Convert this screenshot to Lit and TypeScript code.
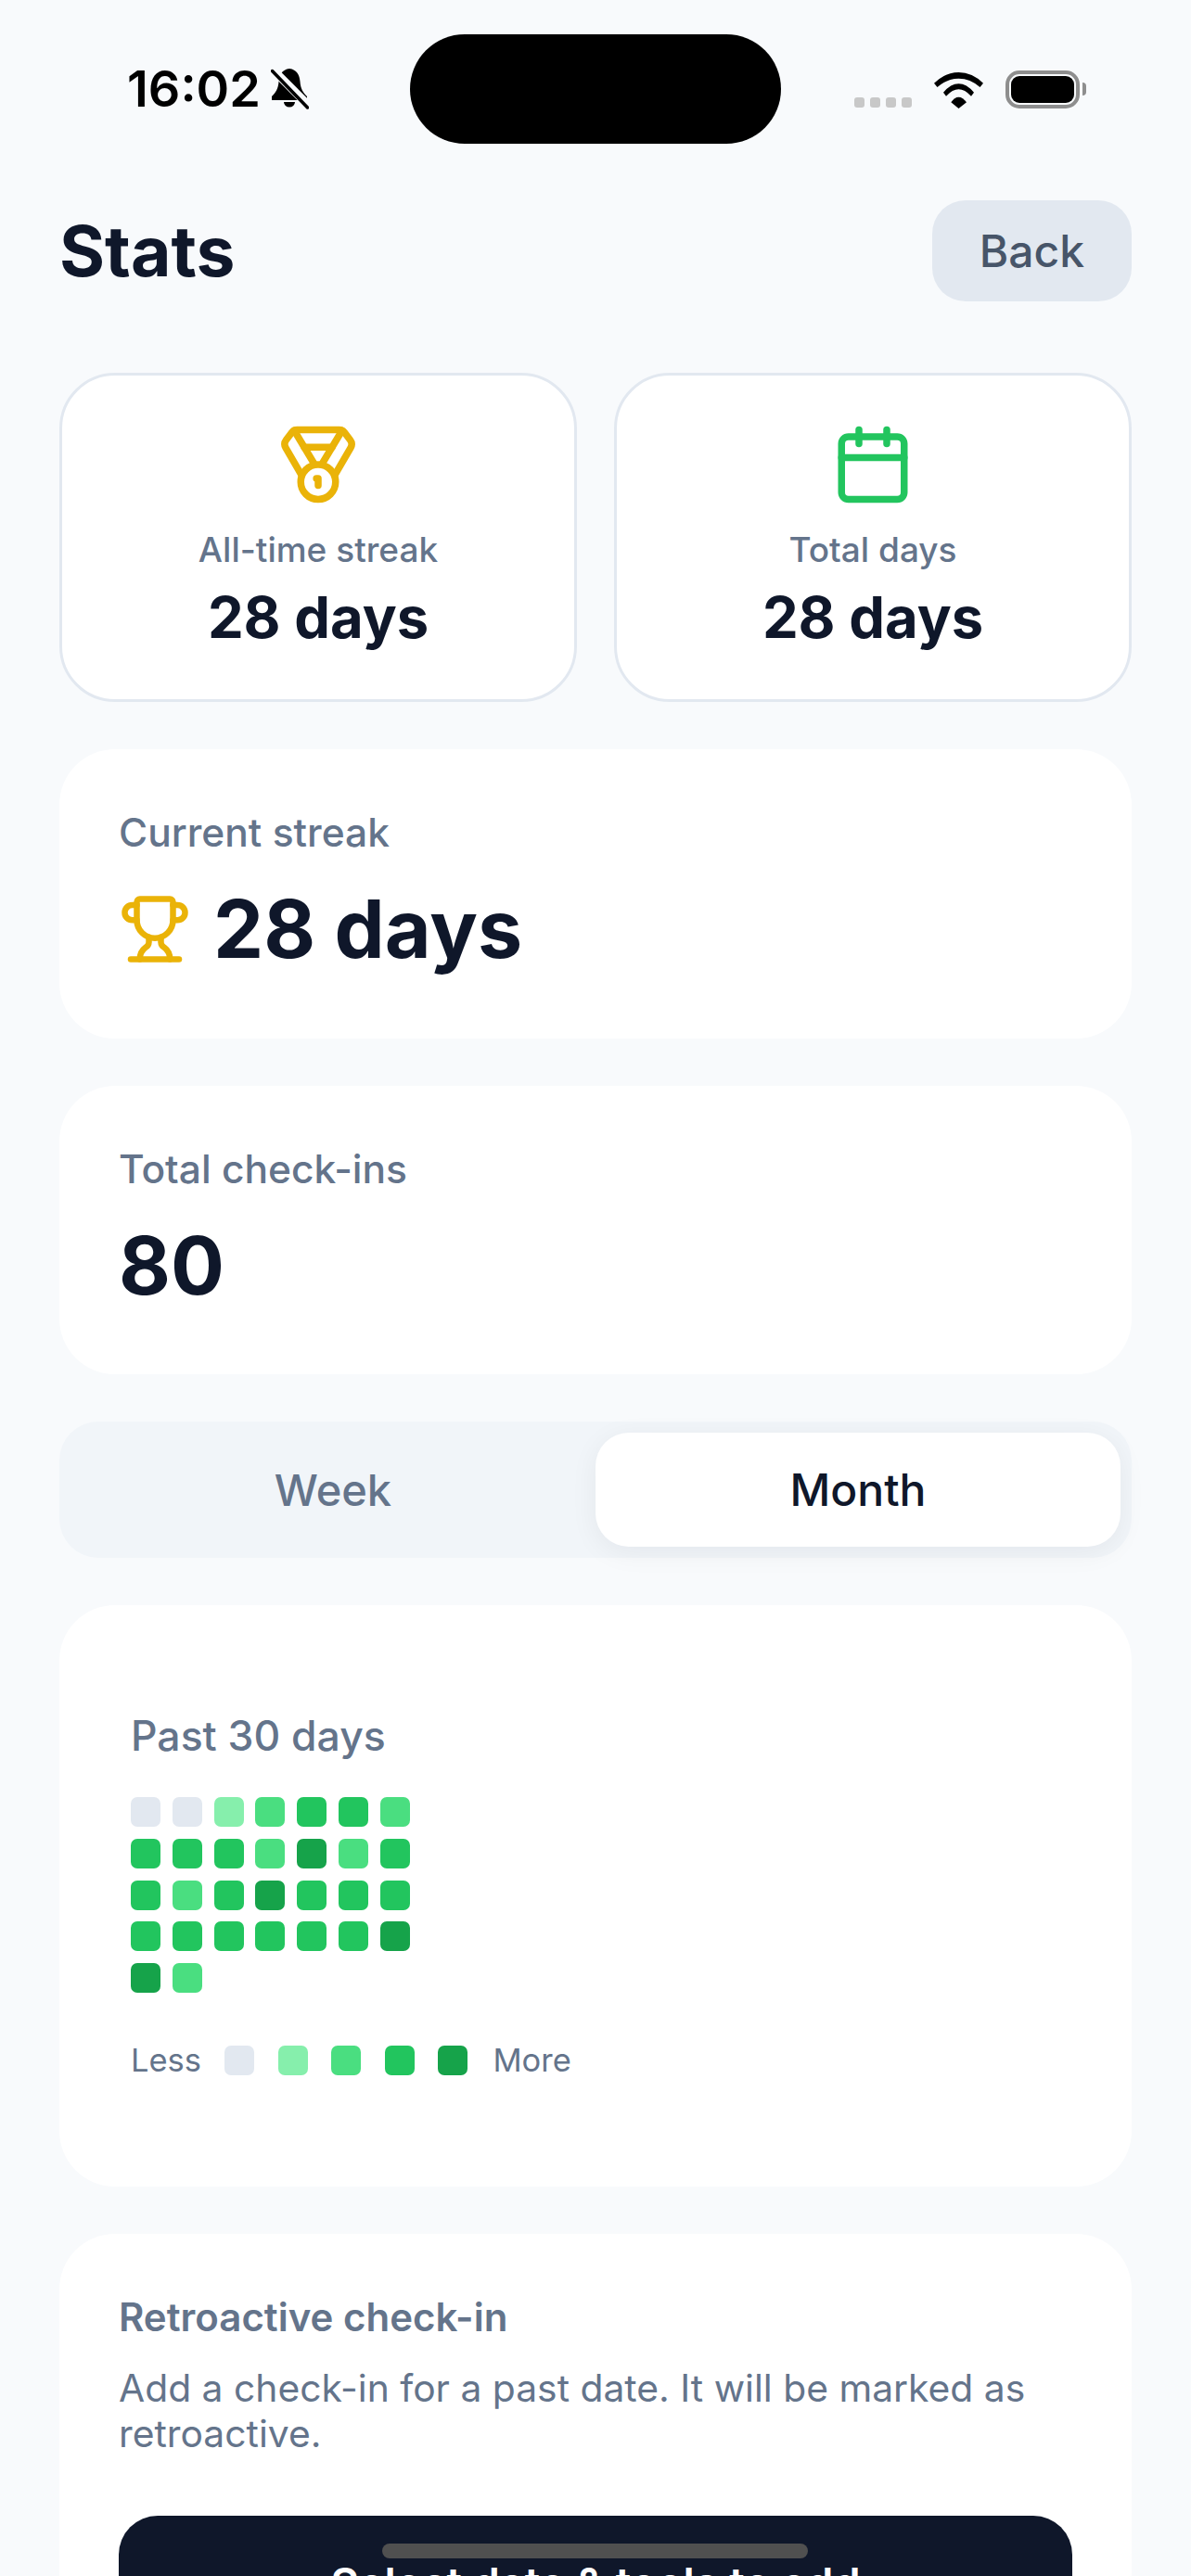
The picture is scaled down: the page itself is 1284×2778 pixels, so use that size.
import { LitElement, html, css, svg } from "lit";
import { customElement } from "lit/decorators.js";

const LEVELS = ["#e2e8f0", "#86efac", "#4ade80", "#22c55e", "#16a34a"];

// past 30 days, oldest first
const DAYS = [
  0, 0, 1, 2, 3, 3, 2,
  3, 3, 3, 2, 4, 2, 3,
  3, 2, 3, 4, 3, 3, 3,
  3, 3, 3, 3, 3, 3, 4,
  4, 2,
];

const medal = svg`
  <path d="M7.21 15 2.66 7.14a2 2 0 0 1 .13-2.2L4.4 2.8A2 2 0 0 1 6 2h12a2 2 0 0 1 1.6.8l1.61 2.14a2 2 0 0 1 .14 2.2L16.79 15" />
  <path d="M11 12 5.12 2.2" />
  <path d="m13 12 5.88-9.8" />
  <path d="M8 7h8" />
  <circle cx="12" cy="17" r="5" />
  <path d="M12 18v-2h-.5" />
`;

const calendar = svg`
  <path d="M8 2v4" />
  <path d="M16 2v4" />
  <rect width="18" height="18" x="3" y="4" rx="2" />
  <path d="M3 10h18" />
`;

const trophy = svg`
  <path d="M10 14.66v1.626a2 2 0 0 1-.976 1.696A5 5 0 0 0 7 21.978" />
  <path d="M14 14.66v1.626a2 2 0 0 0 .976 1.696A5 5 0 0 1 17 21.978" />
  <path d="M18 9h1.5a1 1 0 0 0 0-5H18" />
  <path d="M4 22h16" />
  <path d="M6 9a6 6 0 0 0 12 0V3a1 1 0 0 0-1-1H7a1 1 0 0 0-1 1z" />
  <path d="M6 9H4.5a1 1 0 0 1 0-5H6" />
`;

@customElement("app-root")
export class AppRoot extends LitElement {
  static styles = css`
    :host {
      display: block;
      position: relative;
      width: 1284px;
      height: 2778px;
      overflow: hidden;
      background: #f8fafc;
      font-family: Inter, "Liberation Sans", sans-serif;
      color: #0f172a;
    }

    svg.icon {
      display: block;
      fill: none;
      stroke-linecap: round;
      stroke-linejoin: round;
      stroke-width: 2;
    }

    .status {
      display: flex;
      align-items: center;
      height: 118px;
      padding: 37px 0 0 137px;
      color: #000;
    }
    .status-left {
      display: flex;
      align-items: center;
      gap: 16px;
      width: 305px;
    }
    .time {
      font-size: 54px;
      font-weight: 600;
      line-height: 60px;
      width: 139px;
    }
    .island {
      width: 400px;
      height: 118px;
      border-radius: 59px;
      background: #000;
    }
    .status-right {
      display: flex;
      align-items: flex-end;
      gap: 24px;
      margin-left: 79px;
    }
    .dots {
      display: flex;
      gap: 6px;
      margin-bottom: 1px;
    }
    .dots span {
      width: 11px;
      height: 11px;
      border-radius: 3px;
      background: #c8c8c8;
    }
    .battery {
      display: flex;
      align-items: center;
      gap: 3px;
    }
    .battery-body {
      width: 80px;
      height: 41px;
      box-sizing: border-box;
      border: 4px solid #8e8e8e;
      border-radius: 15px;
      padding: 2px;
    }
    .battery-body div {
      height: 100%;
      border-radius: 9px;
      background: #000;
    }
    .battery-nub {
      width: 4px;
      height: 14px;
      border-radius: 0 4px 4px 0;
      background: #8e8e8e;
    }

    main {
      display: flex;
      flex-direction: column;
      gap: 51px;
      padding: 0 64px;
    }

    header {
      display: flex;
      align-items: center;
      justify-content: space-between;
      margin: 61px 0 77px;
    }
    h1 {
      margin: 0;
      font-size: 75px;
      font-weight: 700;
      line-height: 84px;
    }
    .back {
      width: 215px;
      height: 109px;
      border-radius: 36px;
      background: #e2e8f0;
      color: #475569;
      font-size: 48px;
      font-weight: 500;
      line-height: 109px;
      text-align: center;
    }

    .highlights {
      display: grid;
      grid-template-columns: 1fr 1fr;
      gap: 40px;
    }
    .highlight {
      display: flex;
      flex-direction: column;
      align-items: center;
      height: 355px;
      box-sizing: border-box;
      padding-top: 51px;
      border: 3px solid #e2e8f0;
      border-radius: 60px;
      background: #fff;
    }
    .highlight .label {
      margin-top: 25px;
      font-size: 37px;
      font-weight: 500;
      line-height: 44px;
      color: #64748b;
    }
    .highlight .value {
      margin-top: 15px;
      font-size: 61.5px;
      font-weight: 700;
      line-height: 72px;
    }

    .card {
      box-sizing: border-box;
      border-radius: 60px;
      background: #fff;
    }
    .metric {
      height: 311.5px;
      padding: 64px 64px 0;
    }
    .card-label {
      font-size: 42.5px;
      font-weight: 500;
      line-height: 52px;
      color: #64748b;
    }
    .metric-value {
      display: flex;
      align-items: center;
      gap: 24px;
      margin-top: 27px;
      font-size: 86px;
      font-weight: 700;
      line-height: 102px;
    }

    .tabs {
      display: flex;
      height: 147px;
      box-sizing: border-box;
      padding: 12px;
      border-radius: 42px;
      background: #f1f5f9;
    }
    .tab {
      flex: 1;
      border-radius: 36px;
      font-size: 47px;
      font-weight: 500;
      line-height: 123px;
      text-align: center;
      color: #64748b;
    }
    .tab.active {
      background: #fff;
      color: #0f172a;
      font-size: 48px;
      box-shadow: 0 6px 30px rgba(15, 23, 42, 0.06);
    }

    .chart {
      height: 627px;
      padding: 115px 77px 0;
    }
    .chart .card-label {
      font-size: 44.5px;
    }
    .grid {
      display: grid;
      grid-template-columns: repeat(7, 32px);
      gap: 12.75px;
      margin-top: 40px;
    }
    .cell {
      width: 32px;
      height: 32px;
      border-radius: 7px;
    }
    .legend {
      display: flex;
      align-items: center;
      gap: 25.4px;
      margin-top: 57px;
      font-size: 34.5px;
      line-height: 32px;
      color: #64748b;
    }
    .legend .more {
      margin-left: 2px;
    }

    .retro {
      padding: 64px 64px 0;
      height: 500px;
    }
    .retro .card-label {
      font-size: 42px;
      font-weight: 600;
    }
    .retro p {
      margin: 26px 0 64px;
      font-size: 40.8px;
      line-height: 49px;
      color: #64748b;
    }
    .submit {
      height: 146px;
      border-radius: 42px;
      background: #0f172a;
      color: #fff;
      font-size: 46.7px;
      font-weight: 600;
      line-height: 146px;
      text-align: center;
    }

    .home-indicator {
      position: absolute;
      left: 412px;
      top: 2743px;
      width: 459px;
      height: 16px;
      border-radius: 8px;
      background: #505050;
    }
  `;

  renderIcon(shape: unknown, size: number, color: string) {
    return html`<svg class="icon" width=${size} height=${size} viewBox="0 0 24 24" stroke=${color}>${shape}</svg>`;
  }

  renderStatus() {
    return html`
      <div class="status">
        <div class="status-left">
          <span class="time">16:02</span>
          <svg width="41" height="46" viewBox="0 0 41 46">
            <path d="M20 1C12 2 9 8 8.5 15C8 23 5 27 1 31V35H39V31C35 27 32 23 31.5 15C31 8 28 2 20 1Z" fill="#000" />
            <path d="M14 37H26A6 5.5 0 0 1 14 37Z" fill="#000" />
            <path d="M3 3L41 41" stroke="#f8fafc" stroke-width="9" />
            <path d="M1.5 3.5L39.5 43" stroke="#000" stroke-width="3.5" stroke-linecap="round" />
          </svg>
        </div>
        <div class="island"></div>
        <div class="status-right">
          <div class="dots"><span></span><span></span><span></span><span></span></div>
          <svg width="53" height="39" viewBox="0 0 53 39">
            <path d="M0 11.7Q12 0 26.5 0T53 11.7L49.5 16Q39 6.7 26.5 6.7T3.5 16Z" fill="#000" />
            <path d="M10 21.7Q18 12.3 26.5 12.3T43 21.7L40 25.7Q33 18.3 26.5 18.3T13 25.7Z" fill="#000" />
            <path d="M18.3 32.3Q22 26.7 26.5 26.7T35 32.3L26.5 39Z" fill="#000" />
          </svg>
          <div class="battery">
            <div class="battery-body"><div></div></div>
            <div class="battery-nub"></div>
          </div>
        </div>
      </div>
    `;
  }

  render() {
    return html`
      ${this.renderStatus()}
      <main>
        <div>
          <header>
            <h1>Stats</h1>
            <div class="back">Back</div>
          </header>
          <div class="highlights">
            <div class="highlight">
              ${this.renderIcon(medal, 90, "#eab308")}
              <div class="label">All-time streak</div>
              <div class="value">28 days</div>
            </div>
            <div class="highlight">
              ${this.renderIcon(calendar, 90, "#22c55e")}
              <div class="label">Total days</div>
              <div class="value">28 days</div>
            </div>
          </div>
        </div>

        <div class="card metric">
          <div class="card-label">Current streak</div>
          <div class="metric-value">${this.renderIcon(trophy, 78, "#eab308")}28 days</div>
        </div>

        <div class="card metric">
          <div class="card-label">Total check-ins</div>
          <div class="metric-value">80</div>
        </div>

        <div class="tabs">
          <div class="tab">Week</div>
          <div class="tab active">Month</div>
        </div>

        <div class="card chart">
          <div class="card-label">Past 30 days</div>
          <div class="grid">
            ${DAYS.map((d) => html`<div class="cell" style="background:${LEVELS[d]}"></div>`)}
          </div>
          <div class="legend">
            <span class="less">Less</span>
            ${LEVELS.map((c) => html`<div class="cell" style="background:${c}"></div>`)}
            <span class="more">More</span>
          </div>
        </div>

        <div class="card retro">
          <div class="card-label">Retroactive check-in</div>
          <p>Add a check-in for a past date. It will be marked as retroactive.</p>
          <div class="submit">Select date &amp; tools to add</div>
        </div>
      </main>
      <div class="home-indicator"></div>
    `;
  }
}
